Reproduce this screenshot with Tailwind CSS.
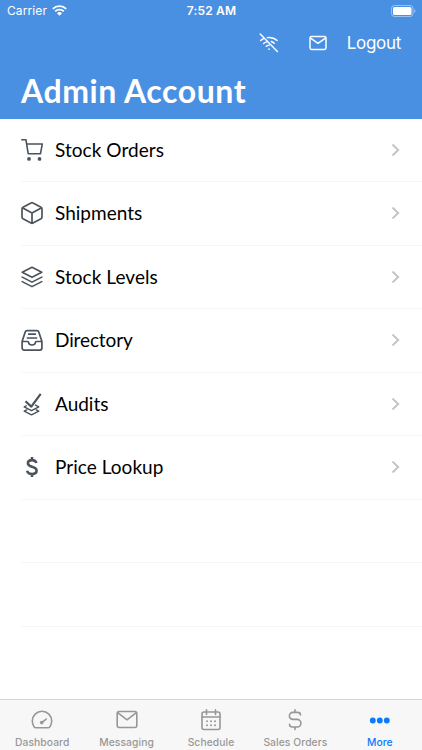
<!DOCTYPE html>
<html lang="en">
<head>
<meta charset="utf-8">
<title>Admin Account</title>
<script src="https://cdn.jsdelivr.net/npm/@tailwindcss/browser@4"></script>
</head>
<body class="bg-white">
<div class="w-[422px] h-[750px] flex flex-col overflow-hidden bg-white font-[Inter,sans-serif]">
  <header class="h-[118.5px] shrink-0 bg-[#4a90e2] text-white flex flex-col">
    <div class="h-[22px] grid grid-cols-3 items-center pl-[7px] pr-[6px] text-[12px]">
      <div class="flex items-center gap-[5px] -mt-[1px]">
        <span class="tracking-[0.1px] leading-[22px]">Carrier</span>
        <svg class="w-[15px] h-[11px]" viewBox="0 0 15 11" fill="none" stroke="currentColor" stroke-width="1.9"><path d="M.8 3.900a9.500 9.500 0 0 1 13.400 0M3.200 6.400a6.100 6.100 0 0 1 8.600 0"/><path d="M7.500 10.800 5 8.200a3.600 3.600 0 0 1 5 0z" fill="currentColor" stroke="none"/></svg>
      </div>
      <span class="text-center font-semibold tracking-[0.2px] whitespace-nowrap">7:52 AM</span>
      <svg class="w-[25px] h-[12px] justify-self-end -mt-[1px]" viewBox="0 0 25 12" fill="none"><rect x=".5" y=".5" width="21.500" height="11" rx="3" stroke="#fff" stroke-opacity=".45"/><rect x="2" y="2" width="18.500" height="8" rx="1.600" fill="#fff"/><path d="M23.300 4v4c1.500-.6 1.500-3.400 0-4" fill="#fff" fill-opacity=".5"/></svg>
    </div>
    <div class="h-[42px] flex items-center justify-end pr-[21px]">
      <svg class="w-[20px] h-[20px] mr-[30px]" viewBox="0 0 20 20" fill="none" stroke="currentColor" stroke-width="1.400" stroke-linecap="round"><path d="m1.200 1 17.200 17.400M8.400 4.600c3.500-.4 7 .6 9.700 3M12.300 8.500c1.100.4 2.100 1 2.900 1.700M1.700 7.600C2.700 6.700 3.800 6 5 5.400M4.600 10.600c.9-.8 2-1.400 3.100-1.700M7.300 13.200c.8-.7 1.800-1 2.800-1"/><circle cx="10" cy="16.100" r=".9" fill="currentColor" stroke="none"/></svg>
      <svg class="w-[18px] h-[16px] mr-[20px]" viewBox="0 0 18 16" fill="none" stroke="currentColor" stroke-width="1.500" stroke-linejoin="round"><rect x="1" y="1.400" width="16" height="13" rx="1.600"/><path d="m1.200 2.800 7.800 5.500 7.800-5.500"/></svg>
      <span class="text-[17px] tracking-[-0.300px] leading-[22px]">Logout</span>
    </div>
    <h1 class="pl-[21px] h-[54px] leading-[54px] text-[32px] font-bold font-[Lato,sans-serif] tracking-[0.550px]">Admin Account</h1>
  </header>
  <main class="flex-1 flex flex-col text-black font-[Lato,sans-serif] text-[19px]">
    <div class="pl-[21px]"><div class="h-[63.5px] border-b border-[#f6f6f6] flex items-center pr-[21px]">
      <svg class="w-[22px] h-[24px] text-[#4b535c]" viewBox="0 0 22 24" fill="none" stroke="currentColor" stroke-width="1.600" stroke-linejoin="round" stroke-linecap="round"><path d="M.8 1.700h4.100l2.300 14h12.300L21.300 6H5.700"/><circle cx="8" cy="20.900" r="1.900" fill="currentColor" stroke="none"/><circle cx="18.500" cy="20.900" r="1.900" fill="currentColor" stroke="none"/></svg>
      <span class="ml-[12px] flex-1 tracking-[0.060px]">Stock Orders</span>
      <svg class="w-[10px] h-[14px]" viewBox="0 0 10 14" fill="none" stroke="#c4c4c7" stroke-width="1.900"><path d="m1.500 1.500 5.700 5.500-5.700 5.500"/></svg></div></div>
    <div class="pl-[21px]"><div class="h-[63.5px] border-b border-[#f6f6f6] flex items-center pr-[21px]">
      <svg class="w-[22px] h-[24px] text-[#4b535c]" viewBox="0 0 22 24" fill="none" stroke="currentColor" stroke-width="1.700" stroke-linejoin="round" stroke-linecap="round"><path d="M10 1.900a2 2 0 0 1 2 0l8 4.300a2 2 0 0 1 1 1.700v8.200a2 2 0 0 1-1 1.700l-8 4.300a2 2 0 0 1-2 0l-8-4.300a2 2 0 0 1-1-1.700V7.900a2 2 0 0 1 1-1.700zM1.400 6.800 11 12l9.600-5.200M11 12v10"/></svg>
      <span class="ml-[12px] flex-1 tracking-[0.020px]">Shipments</span>
      <svg class="w-[10px] h-[14px]" viewBox="0 0 10 14" fill="none" stroke="#c4c4c7" stroke-width="1.900"><path d="m1.500 1.500 5.700 5.500-5.700 5.500"/></svg></div></div>
    <div class="pl-[21px]"><div class="h-[63.5px] border-b border-[#f6f6f6] flex items-center pr-[21px]">
      <svg class="w-[22px] h-[24px] text-[#4b535c]" viewBox="0 0 22 24" fill="none" stroke="currentColor" stroke-width="1.600" stroke-linejoin="round" stroke-linecap="round"><path d="m11 2.300 9.800 5-9.800 5-9.800-5zM1.200 12.100l9.800 5 9.800-5M1.200 16.600l9.800 5 9.800-5"/></svg>
      <span class="ml-[12px] flex-1 tracking-[0.060px]">Stock Levels</span>
      <svg class="w-[10px] h-[14px]" viewBox="0 0 10 14" fill="none" stroke="#c4c4c7" stroke-width="1.900"><path d="m1.500 1.500 5.700 5.500-5.700 5.500"/></svg></div></div>
    <div class="pl-[21px]"><div class="h-[63.5px] border-b border-[#f6f6f6] flex items-center pr-[21px]">
      <svg class="w-[22px] h-[24px] text-[#4b535c]" viewBox="0 0 22 24" fill="none" stroke="currentColor" stroke-width="1.700" stroke-linejoin="round" stroke-linecap="round"><path d="M1.100 13.500 4.200 4a2 2 0 0 1 1.900-1.400h9.800A2 2 0 0 1 17.800 4l3.100 9.500v6.600a2 2 0 0 1-2 2H3.100a2 2 0 0 1-2-2zM1.100 13.500h5.700c.5 0 .7.500.8 1 .2 1.600 1.500 2.500 3.400 2.500s3.200-.9 3.400-2.500c.1-.5.3-1 .8-1h5.700M7.700 6.200h6.600M6.400 10h9.200"/></svg>
      <span class="ml-[12px] flex-1 tracking-[-0.120px]">Directory</span>
      <svg class="w-[10px] h-[14px]" viewBox="0 0 10 14" fill="none" stroke="#c4c4c7" stroke-width="1.900"><path d="m1.500 1.500 5.700 5.500-5.700 5.500"/></svg></div></div>
    <div class="pl-[21px]"><div class="h-[63.5px] border-b border-[#f6f6f6] flex items-center pr-[21px]">
      <svg class="w-[22px] h-[24px] text-[#4b535c]" viewBox="0 0 22 24" fill="none" stroke="currentColor" stroke-width="1.400" stroke-linejoin="round"><path d="m4.500 9.300 5.800 5.300L19.700 1.800" stroke-width="2.200"/><path d="M5.800 13.500 3.200 14.900l7.300 3.800 7.300-3.800-3.800-2M6.200 17.700l-3 1.500 7.300 3.700 7.300-3.700-3-1.500"/></svg>
      <span class="ml-[12px] flex-1 tracking-[0px]">Audits</span>
      <svg class="w-[10px] h-[14px]" viewBox="0 0 10 14" fill="none" stroke="#c4c4c7" stroke-width="1.900"><path d="m1.500 1.500 5.700 5.500-5.700 5.500"/></svg></div></div>
    <div class="pl-[21px]"><div class="h-[63.5px] border-b border-[#f6f6f6] flex items-center pr-[21px]">
      <svg class="w-[22px] h-[24px] text-[#4b535c]" viewBox="0 0 22 24" fill="none" stroke="currentColor" stroke-width="2.600"><path d="M15.400 8c-.5-1.900-2-2.900-4.400-2.900-2.500 0-4.100 1.300-4.100 3.200 0 2 1.600 2.800 4.100 3.500 2.900.8 4.600 1.500 4.600 3.800 0 2.100-1.700 3.400-4.500 3.400-2.700 0-4.500-1.100-5-3.200M11 2v3.500M11 18.500V22"/></svg>
      <span class="ml-[12px] flex-1 tracking-[0.030px]">Price Lookup</span>
      <svg class="w-[10px] h-[14px]" viewBox="0 0 10 14" fill="none" stroke="#c4c4c7" stroke-width="1.900"><path d="m1.500 1.500 5.700 5.500-5.700 5.500"/></svg></div></div>
    <div class="ml-[21px] h-[63.5px] border-b border-[#f6f6f6]"></div>
    <div class="ml-[21px] h-[63.5px] border-b border-[#f6f6f6]"></div>
  </main>
  <nav class="h-[51px] shrink-0 bg-[#f7f7f7] border-t border-[#d5d5d6] grid grid-cols-5 text-[#979797] text-[10.300px] font-medium tracking-[0.080px] leading-[14px] text-center">
    <div class="flex flex-col items-center pt-[9px] gap-[4px]">
      <svg class="w-[22px] h-[22px]" viewBox="0 0 22 22" fill="none" stroke="currentColor" stroke-width="1.600" stroke-linejoin="round" stroke-linecap="round"><path d="M5 18.800c-.8 0-1.400-.3-1.800-.9A9.700 9.700 0 0 1 1.300 12 9.700 9.700 0 0 1 20.700 12a9.700 9.700 0 0 1-1.900 5.900c-.4.600-1 .9-1.800.9z"/><circle cx="10.700" cy="13.600" r="1.800" fill="currentColor" stroke="none"/><path d="m11 13.400 4.200-3.300"/></svg>
      <span>Dashboard</span></div>
    <div class="flex flex-col items-center pt-[9px] gap-[4px]">
      <svg class="w-[22px] h-[22px]" viewBox="0 0 22 22" fill="none" stroke="currentColor" stroke-width="1.600" stroke-linejoin="round"><rect x="1.200" y="2.500" width="19.600" height="16" rx="2"/><path d="m1.700 3.700 9.300 7.100 9.300-7.100"/></svg>
      <span>Messaging</span></div>
    <div class="flex flex-col items-center pt-[9px] gap-[4px]">
      <svg class="w-[22px] h-[22px]" viewBox="0 0 22 22" fill="none" stroke="currentColor" stroke-width="1.600" stroke-linejoin="round" stroke-linecap="round"><rect x="2" y="3" width="18" height="17.500" rx="2"/><path d="M6.500.9v4.600M15.500.9v4.600M2 8h18"/><path d="M7 12.200h.01M11 12.200h.01M15 12.200h.01M7 16.200h.01M11 16.200h.01M15 16.200h.01" stroke-width="2"/></svg>
      <span>Schedule</span></div>
    <div class="flex flex-col items-center pt-[9px] gap-[4px]">
      <svg class="w-[22px] h-[22px]" viewBox="0 0 22 22" fill="none" stroke="currentColor" stroke-width="1.600" stroke-linecap="round"><path d="M16.500 6c0-1.700-1.200-2.600-2.900-2.600H8.900a3.500 3.500 0 0 0 0 7h4.200a3.800 3.800 0 0 1 0 7.600H8.400c-1.700 0-2.900-1.100-2.900-2.800M11 .9v2.500M11 18v2.500"/></svg>
      <span class="whitespace-nowrap">Sales Orders</span></div>
    <div class="flex flex-col items-center pt-[9px] gap-[4px] text-[#0a7aff]">
      <svg class="w-[22px] h-[22px]" viewBox="0 0 22 22" fill="currentColor"><circle cx="3.800" cy="11.500" r="2.900"/><circle cx="10.800" cy="11.500" r="2.900"/><circle cx="17.800" cy="11.500" r="2.900"/></svg>
      <span>More</span></div>
  </nav>
</div>
</body>
</html>
